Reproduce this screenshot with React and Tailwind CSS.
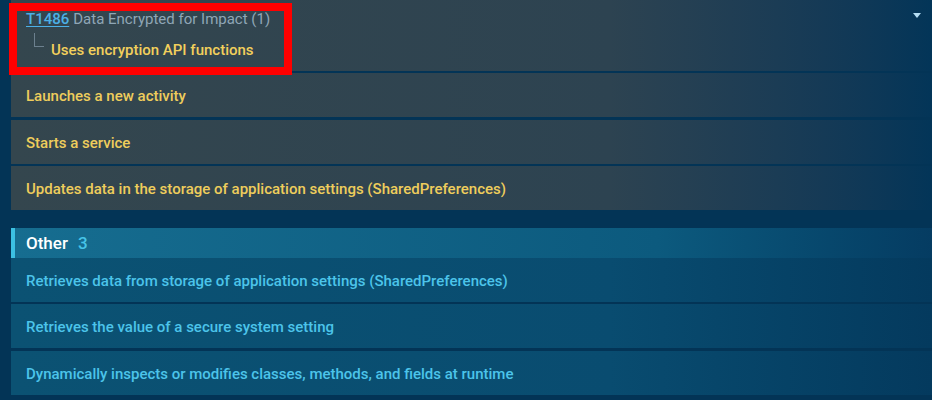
import React from 'react';

const grayRows = [
    'Launches a new activity',
    'Starts a service',
    'Updates data in the storage of application settings (SharedPreferences)',
];

const otherRows = [
    'Retrieves data from storage of application settings (SharedPreferences)',
    'Retrieves the value of a secure system setting',
    'Dynamically inspects or modifies classes, methods, and fields at runtime',
];

const App = () => {
    return (
        <div className="relative min-h-screen bg-[#033456] pl-[11px] font-['Roboto',sans-serif] text-[15px] overflow-hidden">
            <div className="flex flex-col gap-[2px]">
                {/* technique row */}
                <div className="relative h-[71px] bg-linear-to-r from-[#34464e] via-[#2d4351] via-65% to-[#033558] pl-[15px] pt-[8px]">
                    <div className="leading-[22px]">
                        <a className="font-medium text-[#4cb0e6] underline underline-offset-2">T1486</a>
                        <span className="ml-[4px] text-[#8fa6b6]">Data Encrypted for Impact (1)</span>
                    </div>
                    <div className="mt-[3px] flex items-start">
                        <div className="ml-[8px] h-[14px] w-[10px] border-l border-b border-[#6c808e]" />
                        <span className="ml-[7px] mt-[6px] font-medium text-[#f2d05c] leading-[22px]">Uses encryption API functions</span>
                    </div>
                    <div className="absolute right-[11px] top-[13px] h-0 w-0 border-l-[4px] border-r-[4px] border-t-[5px] border-l-transparent border-r-transparent border-t-[#b5def4]" />
                </div>
                {grayRows.map((row, i) => (
                    <div key={row} className={`flex h-[44px] items-center bg-linear-to-r from-[#34464e] via-[#2d4351] via-65% to-[#033558] pl-[15px] pt-[2px] ${i === 1 ? 'mt-[1px]' : ''}`}>
                        <span className="font-medium text-[#eecd5c]">{row}</span>
                    </div>
                ))}
            </div>

            <div className="mt-[18px] flex h-[30px] items-center border-l-[4px] border-[#3cc0e2] bg-linear-to-r from-[#166d90] via-[#0c5a7e] via-70% to-[#053c62] pl-[11px] pt-[1px]">
                <span className="text-[17px] font-medium text-white">Other</span>
                <span className="ml-[10px] text-[17px] font-medium text-[#46c4e8]">3</span>
            </div>
            <div className="flex flex-col gap-[2px]">
                {otherRows.map((row, i) => (
                    <div key={row} className={`flex h-[44px] items-center bg-linear-to-r from-[#0b5273] via-[#094c70] via-65% to-[#043a5e] pl-[15px] pt-[2px] ${i === 2 ? 'mt-[1px]' : ''}`}>
                        <span className="font-medium text-[#4cc4ea]">{row}</span>
                    </div>
                ))}
            </div>

            {/* highlight box */}
            <div className="absolute left-[9px] top-[3px] h-[72px] w-[283px] border-[8px] border-[#ff0000]" />
        </div>
    );
};

export default App;
